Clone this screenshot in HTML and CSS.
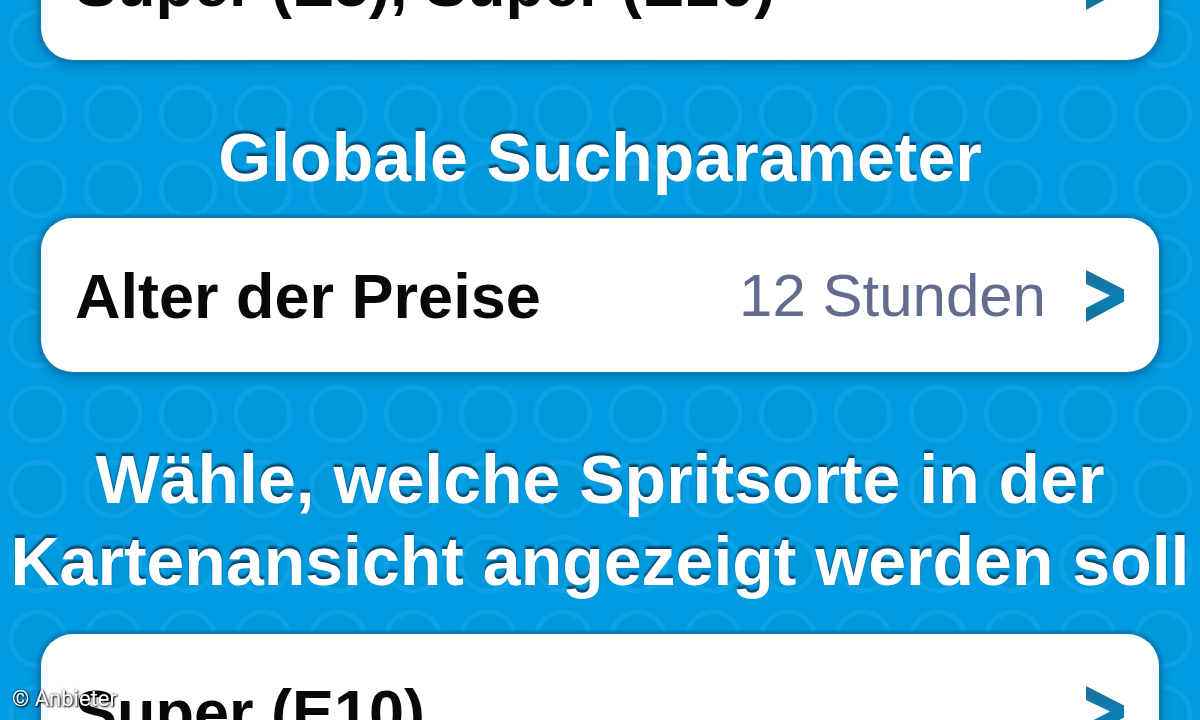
FILE: index.html
```html
<!DOCTYPE html>
<html lang="de">
<head>
<meta charset="utf-8">
<meta name="viewport" content="width=device-width, initial-scale=1">
<title>Suchparameter</title>
<link rel="stylesheet" href="styles.css">
</head>
<body>
<svg class="sprite" aria-hidden="true">
  <defs>
    <linearGradient id="chevron-fill" x1="0" y1="0" x2="0" y2="1">
      <stop offset="0" stop-color="#1f6d94"/>
      <stop offset=".55" stop-color="#0a80b6"/>
      <stop offset="1" stop-color="#156f96"/>
    </linearGradient>
    <symbol id="chevron" viewBox="0 0 40 52">
      <path fill="url(#chevron-fill)" d="M0 0 38 19.500V31.500L0 52V38L24 25.500 0 14Z"/>
    </symbol>
    <pattern id="rings" width="75" height="75" patternUnits="userSpaceOnUse">
      <circle cx="38" cy="39" r="27" fill="#0099dd" stroke="#0da2e8" stroke-width="5"/>
    </pattern>
  </defs>
</svg>
<svg class="backdrop" aria-hidden="true"><rect width="100%" height="100%" fill="url(#rings)"/></svg>
<main class="settings">
  <button class="row" type="button">
    <span class="label">Super (E5), Super (E10)</span>
    <svg class="chevron" aria-hidden="true"><use href="#chevron"/></svg>
  </button>
  <h2 class="heading">Globale Suchparameter</h2>
  <button class="row" type="button">
    <span class="label">Alter der Preise</span>
    <span class="value">12 Stunden</span>
    <svg class="chevron" aria-hidden="true"><use href="#chevron"/></svg>
  </button>
  <h2 class="heading heading-long">Wähle, welche Spritsorte in der<br>Kartenansicht angezeigt werden soll</h2>
  <button class="row" type="button">
    <span class="label">Super (E10)</span>
    <svg class="chevron" aria-hidden="true"><use href="#chevron"/></svg>
  </button>
</main>
<small class="credit">© Anbieter</small>
</body>
</html>
```
FILE: styles.css
```css
* {
  box-sizing: border-box;
}

body {
  margin: 0;
  height: 100vh;
  overflow: hidden;
  background: #009be0;
  font-family: "Liberation Sans", Arial, sans-serif;
}

.sprite {
  position: absolute;
  width: 0;
  height: 0;
}

.backdrop {
  position: fixed;
  inset: 0;
  width: 100%;
  height: 100%;
}

/* The list is scrolled part of the way through its first row. */
.settings {
  position: relative;
  display: flex;
  flex-direction: column;
  margin-top: -94px;
}

.row {
  display: flex;
  align-items: center;
  gap: 40px;
  margin: 0 41px;
  padding: 41px 33px 39px 34px;
  border: 0;
  border-radius: 32px;
  background: #fff;
  box-shadow: 0 0 3px 3px #087bb3, 0 4px 10px 3px rgba(0, 100, 155, 0.5);
  font-family: inherit;
  text-align: left;
  white-space: nowrap;
}

.label {
  flex: 1;
  color: #080808;
  font-size: 63px;
  font-weight: bold;
  line-height: 74px;
}

.value {
  color: #626c8e;
  font-size: 60px;
  line-height: 74px;
}

.chevron {
  flex: none;
  width: 40px;
  height: 52px;
}

.heading {
  margin: 56px 0 20px;
  color: #fff;
  font-size: 68px;
  font-weight: bold;
  line-height: 82px;
  text-align: center;
  text-shadow: 0 -3px 2px rgba(10, 50, 80, 0.8);
  white-space: nowrap;
}

.heading-long {
  margin: 66px 0 32px;
}

.credit {
  position: fixed;
  left: 12px;
  bottom: 8px;
  color: #fff;
  font-family: Roboto, sans-serif;
  font-size: 22px;
  line-height: 26px;
  text-shadow: 1px 1px 2px #000, 0 0 3px rgba(0, 0, 0, 0.7);
}
```
